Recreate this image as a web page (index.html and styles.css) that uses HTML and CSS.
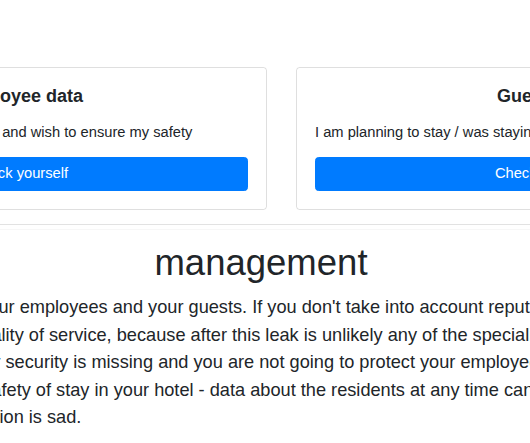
FILE: index.html
```html
<!DOCTYPE html>
<html lang="en">
<head>
<meta charset="utf-8">
<title>Hotel data leak check</title>
<link rel="stylesheet" href="styles.css">
</head>
<body>
<main class="page">
  <div class="cards">
    <div class="card">
      <h5 class="card-title">Employee data</h5>
      <p class="card-text">I am a staff member of the hotel and wish to ensure my safety</p>
      <a class="btn" href="#">Check yourself</a>
    </div>
    <div class="card">
      <h5 class="card-title">Guest data</h5>
      <p class="card-text">I am planning to stay / was staying in the hotel</p>
      <a class="btn" href="#">Check yourself</a>
    </div>
  </div>
  <hr class="divider">
  <section class="about">
    <h1 class="about-title">management</h1>
    <p class="lead">all your employees and your guests. If you don't take into account reputation, think at least about<br>a quality of service, because after this leak is unlikely any of the specialists will want to work with you.<br>cyber security is missing and you are not going to protect your employees, then you don't care<br>for safety of stay in your hotel - data about the residents at any time can be stolen, and the<br>situation is sad.</p>
  </section>
</main>
</body>
</html>
```
FILE: styles.css
```css
html, body {
  margin: 0;
  padding: 0;
  overflow: hidden;
  background: #fff;
}

body {
  font-family: "Liberation Sans", Arial, sans-serif;
  color: #212529;
  font-size: 14.7px;
  line-height: 1.5;
}

.page {
  width: 530px;
}

.cards {
  display: flex;
  gap: 29px;
  margin-left: -228px;
  padding-top: 67px;
  width: 1019px;
}

.card {
  flex: 0 0 495px;
  min-width: 0;
  box-sizing: border-box;
  border: 1px solid rgba(0, 0, 0, 0.125);
  border-radius: 3.6px;
  padding: 18px;
}

.card-title {
  margin: 0 0 13px;
  font-size: 18px;
  line-height: 21.6px;
  font-weight: 700;
  text-align: center;
}

.card-text {
  margin: 0 0 14.4px;
  line-height: 22px;
}

.btn {
  display: block;
  box-sizing: border-box;
  height: 34px;
  padding: 5.2px 10.8px;
  border: 1px solid #007bff;
  border-radius: 3.6px;
  background: #007bff;
  color: #fff;
  text-align: center;
  text-decoration: none;
  line-height: 21.6px;
}

.divider {
  margin: 14px 0 0;
  width: 530px;
  border: 0;
  border-top: 1px solid #e2e2e2;
  border-bottom: 1px solid #f7f7f7;
  height: 4px;
}

.about {
  margin-left: -44px;
  width: 610px;
}

.about-title {
  margin: 11px 0 9.5px;
  font-size: 36.5px;
  line-height: 1.2;
  font-weight: 400;
  text-align: center;
}

.lead {
  margin: 0;
  font-size: 18.2px;
  line-height: 27.5px;
  font-weight: 300;
  white-space: nowrap;
}
```
